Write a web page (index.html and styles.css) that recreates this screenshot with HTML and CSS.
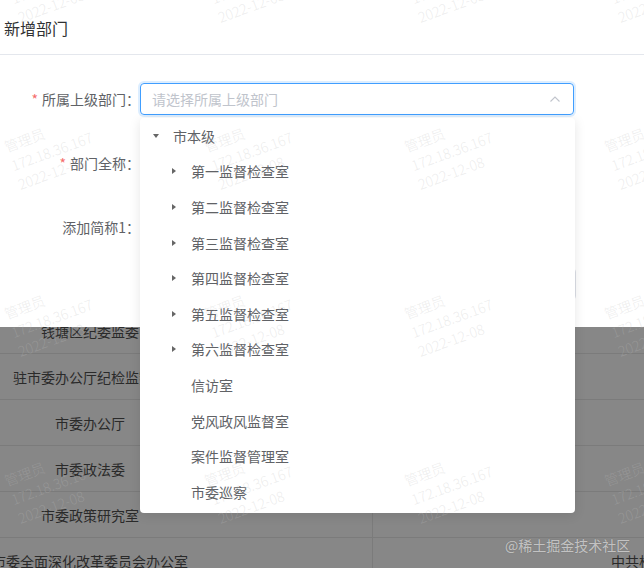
FILE: index.html
```html
<!DOCTYPE html>
<html lang="zh-CN">
<head>
<meta charset="utf-8">
<title>新增部门</title>
<link rel="stylesheet" href="styles.css">
</head>
<body>
<div class="page">
  <section class="dialog">
    <header class="dialog-header">新增部门</header>
    <form class="form">
      <div class="form-item">
        <label class="form-label required">所属上级部门：</label>
        <div class="select is-focus">
          <span class="placeholder">请选择所属上级部门</span>
          <svg class="arrow" viewBox="0 0 12 12" width="12" height="12"><path d="M1.5 8.5 L6 4 L10.5 8.5" fill="none" stroke="#c0c4cc" stroke-width="1.1"/></svg>
        </div>
      </div>
      <div class="form-item">
        <label class="form-label required">部门全称：</label>
        <div class="input"></div>
      </div>
      <div class="form-item form-item-gap">
        <label class="form-label">添加简称1：</label>
        <div class="input"></div>
      </div>
      <div class="form-item form-item-last">
        <label class="form-label"></label>
        <div class="input input-wide"></div>
      </div>
    </form>
  </section>

  <div class="table-wrap">
    <div class="table">
      <div class="row"><div class="cell cell-name">钱塘区纪委监委</div><div class="cell cell-parent">杭州市纪委监委</div></div>
      <div class="row"><div class="cell cell-name">驻市委办公厅纪检监察组</div><div class="cell cell-parent">中共杭州市委办公厅</div></div>
      <div class="row"><div class="cell cell-name">市委办公厅</div><div class="cell cell-parent">中共杭州市委</div></div>
      <div class="row"><div class="cell cell-name">市委政法委</div><div class="cell cell-parent">中共杭州市委</div></div>
      <div class="row"><div class="cell cell-name">市委政策研究室</div><div class="cell cell-parent">中共杭州市委</div></div>
      <div class="row"><div class="cell cell-name">市委全面深化改革委员会办公室</div><div class="cell cell-parent">中共杭州市委全面深化改革委员会办公室</div></div>
    </div>
  </div>

  <div class="dropdown">
    <ul class="tree">
      <li>
        <div class="node"><span class="caret"><i class="tri tri-down"></i></span><span class="label">市本级</span></div>
        <ul class="children">
          <li><div class="node"><span class="caret"><i class="tri tri-right"></i></span><span class="label">第一监督检查室</span></div></li>
          <li><div class="node"><span class="caret"><i class="tri tri-right"></i></span><span class="label">第二监督检查室</span></div></li>
          <li><div class="node"><span class="caret"><i class="tri tri-right"></i></span><span class="label">第三监督检查室</span></div></li>
          <li><div class="node"><span class="caret"><i class="tri tri-right"></i></span><span class="label">第四监督检查室</span></div></li>
          <li><div class="node"><span class="caret"><i class="tri tri-right"></i></span><span class="label">第五监督检查室</span></div></li>
          <li><div class="node"><span class="caret"><i class="tri tri-right"></i></span><span class="label">第六监督检查室</span></div></li>
          <li><div class="node"><span class="caret"></span><span class="label">信访室</span></div></li>
          <li><div class="node"><span class="caret"></span><span class="label">党风政风监督室</span></div></li>
          <li><div class="node"><span class="caret"></span><span class="label">案件监督管理室</span></div></li>
          <li><div class="node"><span class="caret"></span><span class="label">市委巡察</span></div></li>
        </ul>
      </li>
    </ul>
  </div>

  <div class="watermark">
    <div class="wm-cell"><div class="wm">管理员<br>172.18.36.167<br>2022-12-08</div></div>
    <div class="wm-cell"><div class="wm">管理员<br>172.18.36.167<br>2022-12-08</div></div>
    <div class="wm-cell"><div class="wm">管理员<br>172.18.36.167<br>2022-12-08</div></div>
    <div class="wm-cell"><div class="wm">管理员<br>172.18.36.167<br>2022-12-08</div></div>
    <div class="wm-cell"><div class="wm">管理员<br>172.18.36.167<br>2022-12-08</div></div>
    <div class="wm-cell"><div class="wm">管理员<br>172.18.36.167<br>2022-12-08</div></div>
    <div class="wm-cell"><div class="wm">管理员<br>172.18.36.167<br>2022-12-08</div></div>
    <div class="wm-cell"><div class="wm">管理员<br>172.18.36.167<br>2022-12-08</div></div>
    <div class="wm-cell"><div class="wm">管理员<br>172.18.36.167<br>2022-12-08</div></div>
    <div class="wm-cell"><div class="wm">管理员<br>172.18.36.167<br>2022-12-08</div></div>
    <div class="wm-cell"><div class="wm">管理员<br>172.18.36.167<br>2022-12-08</div></div>
    <div class="wm-cell"><div class="wm">管理员<br>172.18.36.167<br>2022-12-08</div></div>
    <div class="wm-cell"><div class="wm">管理员<br>172.18.36.167<br>2022-12-08</div></div>
    <div class="wm-cell"><div class="wm">管理员<br>172.18.36.167<br>2022-12-08</div></div>
    <div class="wm-cell"><div class="wm">管理员<br>172.18.36.167<br>2022-12-08</div></div>
    <div class="wm-cell"><div class="wm">管理员<br>172.18.36.167<br>2022-12-08</div></div>
  </div>

  <div class="brand">@稀土掘金技术社区</div>
</div>
</body>
</html>
```

FILE: styles.css
```css
* {
  box-sizing: border-box;
  margin: 0;
  padding: 0;
}

html, body {
  width: 644px;
  height: 568px;
  overflow: hidden;
}

body {
  font-family: "Noto Sans CJK SC", "Microsoft YaHei", sans-serif;
  font-size: 14px;
  color: #606266;
  background: #878787;
}

.page {
  position: relative;
  width: 644px;
  height: 568px;
  overflow: hidden;
}

/* dialog */
.dialog {
  background: #fff;
  height: 327px;
}

.dialog-header {
  padding: 16px 4px 14px;
  font-size: 16px;
  line-height: 24px;
  color: #303133;
  border-bottom: 1px solid #e4e7ed;
}

.form {
  padding: 28px 0 27px;
}

.form-item {
  display: flex;
  margin-bottom: 32px;
}

.form-item-gap {
  margin-bottom: 25px;
}

.form-item-last {
  margin-bottom: 0;
}

.form-label {
  flex: none;
  width: 140px;
  text-align: right;
  line-height: 32px;
  white-space: nowrap;
  color: #606266;
}

.form-label.required::before {
  content: "*";
  color: #f56c6c;
  margin-right: 4px;
}

.select {
  width: 434px;
  height: 32px;
  border: 1px solid #409eff;
  border-radius: 4px;
  box-shadow: 0 0 0 2px rgba(64, 158, 255, 0.18);
  display: flex;
  align-items: center;
  justify-content: space-between;
  padding: 0 12px 0 11px;
}

.placeholder {
  color: #c0c4cc;
  line-height: 30px;
}

.arrow {
  display: block;
}

.input {
  width: 434px;
  height: 32px;
  border: 1px solid #dcdfe6;
  border-radius: 4px;
  background: #fff;
}

.input-wide {
  width: 436px;
}

/* table behind the mask */
.table-wrap {
  height: 241px;
  overflow: hidden;
}

.table {
  margin-top: -19px;
}

.row {
  display: flex;
  height: 46px;
  border-bottom: 1px solid #7b7b7b;
}

.cell {
  flex: none;
  display: flex;
  align-items: center;
  justify-content: center;
  white-space: nowrap;
  color: #2a2a2a;
}

.cell-name {
  width: 373px;
  padding-right: 192px;
  border-right: 1px solid #7b7b7b;
}

.cell-parent {
  width: 728px;
}

/* tree dropdown */
.dropdown {
  position: absolute;
  left: 140px;
  top: 118px;
  width: 435px;
  height: 395px;
  background: #fff;
  border-radius: 4px;
  box-shadow: 0 2px 12px 0 rgba(0, 0, 0, 0.1);
}

.tree, .children {
  list-style: none;
}

.children {
  padding-left: 18px;
}

.node {
  display: flex;
  align-items: center;
  height: 35.6px;
  padding-left: 10px;
  color: #606266;
  white-space: nowrap;
}

.caret {
  flex: none;
  width: 12px;
  height: 12px;
  margin-right: 11px;
  display: flex;
  align-items: center;
  justify-content: center;
}

.tri {
  display: block;
  width: 0;
  height: 0;
}

.tri-down {
  border-left: 3.5px solid transparent;
  border-right: 3.5px solid transparent;
  border-top: 4px solid #666;
}

.tri-right {
  border-top: 3.5px solid transparent;
  border-bottom: 3.5px solid transparent;
  border-left: 4px solid #666;
}

/* watermark overlay */
.watermark {
  position: absolute;
  left: 0;
  top: -100px;
  width: 800px;
  height: 668px;
  display: grid;
  grid-template-columns: repeat(4, 200px);
  grid-auto-rows: 167px;
  pointer-events: none;
}

.wm-cell {
  display: flex;
  align-items: center;
}

.wm {
  margin-left: 9px;
  font-size: 14px;
  font-weight: 300;
  line-height: 20px;
  color: rgba(190, 190, 190, 0.28);
  white-space: nowrap;
  transform: rotate(-20deg);
}

.brand {
  position: absolute;
  left: 505px;
  top: 537px;
  font-size: 14px;
  line-height: 16px;
  color: rgba(255, 255, 255, 0.6);
  text-shadow: 0 0 1px rgba(0, 0, 0, 0.25);
  white-space: nowrap;
}
```
